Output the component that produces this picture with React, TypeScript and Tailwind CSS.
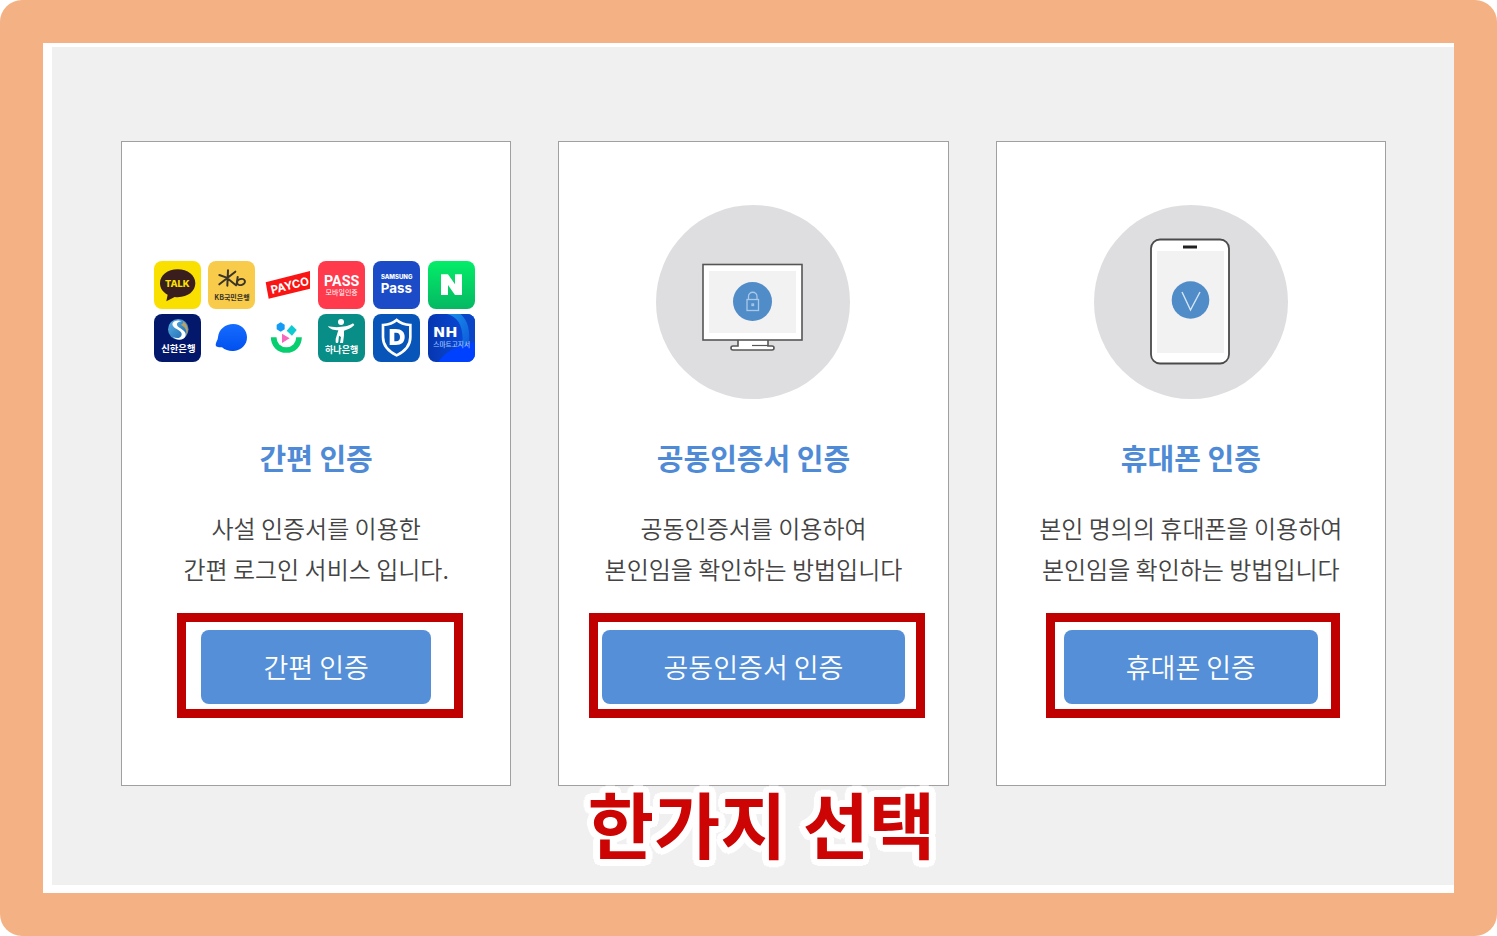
import type { ReactNode } from "react";

const KR = "'Noto Sans CJK KR', sans-serif";

function Tile({ label, children }: { label: string; children: ReactNode }) {
  return (
    <svg viewBox="0 0 141 144" className="h-12 w-[47px]" role="img" aria-label={label}>
      {children}
    </svg>
  );
}

function Providers() {
  return (
    <div className="grid w-[321px] grid-cols-[repeat(6,47px)] justify-between gap-y-[5px]">
      <Tile label="카카오톡">
        <rect width="141" height="144" rx="24" fill="#f9e000" />
        <path d="M71 25c-30 0-53 18-53 42 0 15 9 27 23 34l-4 20 25-13c35 4 62-15 62-41 0-24-23-42-53-42Z" fill="#3a1d1d" />
        <text x="70" y="77" textAnchor="middle" fontFamily="Inter, sans-serif" fontWeight="800" fontSize="28" fill="#f9e000">TALK</text>
      </Tile>
      <Tile label="KB국민은행">
        <rect width="141" height="144" rx="24" fill="#f8cb4b" />
        <g stroke="#3b3428" strokeWidth="6" fill="none" strokeLinecap="round">
          <path d="M60 28 58 74M82 32 34 70M34 42 56 50M58 52 84 73M89 48 86 70" />
          <ellipse cx="99" cy="63" rx="12" ry="9" transform="rotate(-18 99 63)" />
        </g>
        <text x="72" y="116" textAnchor="middle" fontFamily={KR} fontWeight="700" fontSize="21" fill="#3b3428">KB국민은행</text>
      </Tile>
      <Tile label="페이코">
        <path d="M8 64 141 30V83L17 113Z" fill="#fa1414" />
        <text x="27" y="99" transform="rotate(-14 27 99)" fontFamily="Inter, sans-serif" fontWeight="700" fontSize="34" fill="#fff">PAYCO</text>
      </Tile>
      <Tile label="PASS">
        <rect width="141" height="144" rx="24" fill="#ff3a4c" />
        <text x="71" y="75" textAnchor="middle" fontFamily="Roboto, sans-serif" fontWeight="700" fontSize="43" fill="#fff">PASS</text>
        <text x="71" y="103" textAnchor="middle" fontFamily={KR} fontSize="21" fill="#fff">모바일인증</text>
      </Tile>
      <Tile label="삼성패스">
        <rect width="141" height="144" rx="24" fill="#1c4bc8" />
        <text x="71" y="55" textAnchor="middle" fontFamily="Inter, sans-serif" fontWeight="800" fontSize="18" fill="#fff">SAMSUNG</text>
        <text x="70" y="97" textAnchor="middle" fontFamily="Inter, sans-serif" fontWeight="700" fontSize="40" fill="#fff">Pass</text>
      </Tile>
      <Tile label="네이버">
        <defs>
          <linearGradient id="naver" x2="0" y2="1">
            <stop stopColor="#03ed68" />
            <stop offset="1" stopColor="#05b863" />
          </linearGradient>
        </defs>
        <rect width="141" height="144" rx="24" fill="url(#naver)" />
        <path d="M39 40H60L81 70V40H102V102H81L60 72V102H39Z" fill="#fff" />
      </Tile>
      <Tile label="신한은행">
        <defs>
          <linearGradient id="shinhan" x2="1" y2="1">
            <stop stopColor="#5db4e6" />
            <stop offset="1" stopColor="#1763ad" />
          </linearGradient>
        </defs>
        <rect width="141" height="144" rx="24" fill="#04186b" />
        <circle cx="73" cy="46" r="31" fill="url(#shinhan)" />
        <path d="M84 22C66 14 50 25 57 36 63 46 85 49 83 62 81 73 67 75 56 68 68 82 91 79 95 65 99 48 71 43 69 33 67 26 77 22 84 22Z" fill="#fff" />
        <path d="M87 21C103 33 106 51 96 66 100 49 94 39 80 32 88 30 89 25 87 21Z" fill="#b9a268" />
        <text x="73" y="113" textAnchor="middle" fontFamily={KR} fontWeight="700" fontSize="28" fill="#fff">신한은행</text>
      </Tile>
      <Tile label="토스">
        <defs>
          <linearGradient id="toss" x2="0" y2="1">
            <stop stopColor="#166cff" />
            <stop offset="1" stopColor="#0050ee" />
          </linearGradient>
        </defs>
        <path d="M76 30C52 30 32 46 30 70 30 79 23 84 23 93 24 101 35 99 42 100 52 109 65 112 77 111 101 109 117 92 117 70 117 47 99 30 76 30Z" fill="url(#toss)" />
      </Tile>
      <Tile label="카카오뱅크">
        <path d="M41 32 53 25 65 32V46L53 53 41 46Z" fill="#159af5" />
        <path d="M86 33 101 48 87 65 71 50Z" fill="#0dcbd0" />
        <path d="M57 59 80 73 57 87Z" fill="#f568bd" />
        <path d="M32 70C32 92 48 108 70 108S108 92 108 70" fill="none" stroke="#07cf70" strokeWidth="17" />
      </Tile>
      <Tile label="하나은행">
        <rect width="141" height="144" rx="24" fill="#098e87" />
        <circle cx="69" cy="24" r="9" fill="#fff" />
        <path d="M30 36C47 42 86 41 105 28L109 33C99 43 88 47 78 50V64L75 87H66L69 69 63 65 61 84C60 88 53 88 53 84V75L59 55 61 49C49 49 35 46 30 36Z" fill="#fff" />
        <text x="71" y="116" textAnchor="middle" fontFamily={KR} fontWeight="700" fontSize="27" fill="#fff">하나은행</text>
      </Tile>
      <Tile label="드림인증">
        <rect width="141" height="144" rx="24" fill="#0755b8" />
        <path d="M71 18C61 27 45 32 30 33V70C30 96 48 113 71 124 94 113 112 96 112 70V33C97 32 81 27 71 18Z" fill="none" stroke="#fff" strokeWidth="8" />
        <path fillRule="evenodd" d="M50 45H68C86 45 95 54 95 69S86 93 68 93H50ZM64 56V82H69C77 82 81 78 81 69S77 56 69 56Z" fill="#fff" />
      </Tile>
      <Tile label="NH농협">
        <defs>
          <linearGradient id="nh" x2="1" y2="0">
            <stop stopColor="#0636b0" />
            <stop offset="1" stopColor="#0a4ee0" />
          </linearGradient>
          <linearGradient id="nhArc" x2="1" y2="1">
            <stop stopColor="#1a90ea" />
            <stop offset="1" stopColor="#0a50d8" />
          </linearGradient>
          <clipPath id="nhClip">
            <rect width="141" height="144" rx="24" />
          </clipPath>
        </defs>
        <g clipPath="url(#nhClip)">
          <rect width="141" height="144" fill="url(#nh)" />
          <path d="M57 0C87 8 104 32 104 75 104 90 98 104 90 112H141V0Z" fill="url(#nhArc)" />
          <path d="M98 0C120 20 128 50 122 100H141V0Z" fill="#0a45c8" />
          <path d="M30 144C52 112 90 92 141 84V144Z" fill="#0040ff" />
        </g>
        <text x="15" y="70" fontFamily="'DejaVu Sans', sans-serif" fontWeight="700" fontSize="44" fill="#fff">NH</text>
        <text x="16" y="98" fontFamily={KR} fontWeight="500" fontSize="20" fill="#9fc4ff">스마트고지서</text>
      </Tile>
    </div>
  );
}

function MonitorArt() {
  return (
    <svg viewBox="0 0 194 194" className="size-[194px]" aria-hidden="true">
      <circle cx="97" cy="97" r="97" fill="#dedee0" />
      <path d="M82 135V141H77Q75 141 75 143T77 145H116Q118 145 118 143T116 141H112V135" fill="#fff" stroke="#555" strokeWidth="1.6" />
      <path d="M96 140.500H112" stroke="#555" strokeWidth="1.2" />
      <rect x="47" y="59.500" width="99" height="75.500" fill="#fff" stroke="#555" strokeWidth="1.6" />
      <rect x="53" y="66" width="87" height="62" fill="#f2f2f2" />
      <circle cx="96.500" cy="96.500" r="19.500" fill="#508cc8" />
      <g fill="none" stroke="#a8c8e9" strokeWidth="1.300">
        <rect x="91" y="94.500" width="11.500" height="11" />
        <path d="M92.500 94V91.500a4 4 0 0 1 8.500 0V94" />
        <rect x="96" y="99" width="1.500" height="1.500" />
      </g>
    </svg>
  );
}

function PhoneArt() {
  return (
    <svg viewBox="0 0 194 194" className="size-[194px]" aria-hidden="true">
      <circle cx="97" cy="97" r="97" fill="#dedee0" />
      <rect x="57" y="34.500" width="78" height="124" rx="9" fill="#fff" stroke="#4a4a4a" strokeWidth="1.800" />
      <rect x="63" y="46" width="67" height="102" fill="#f2f2f2" />
      <path d="M89 42H103" stroke="#222" strokeWidth="3" />
      <circle cx="96.500" cy="95" r="18.800" fill="#508cc8" />
      <path d="M88 87 96.500 105 106 87" fill="none" stroke="#d6e6f6" strokeWidth="1.400" />
    </svg>
  );
}

interface MethodProps {
  title: string;
  lines: [string, string];
  art: ReactNode;
  markClass: string;
}

function Method({ title, lines, art, markClass }: MethodProps) {
  return (
    <section className="flex flex-col items-center border border-[#a0a0a0] bg-white pt-[63px] pb-[81px]">
      <div className="flex h-[194px] items-end justify-center">{art}</div>
      <h2 className="mt-[38px] text-[29px] leading-10 font-bold text-[#4f8ad6]">{title}</h2>
      <p className="mt-[30px] text-center text-2xl leading-[41px] font-[350] whitespace-nowrap text-[#444]">
        {lines[0]}
        <br />
        {lines[1]}
      </p>
      <div className="relative mt-[41px]">
        <button type="button" className="block h-[74px] rounded-lg bg-[#558fd8] px-[62px] text-[27px] font-[350] whitespace-nowrap text-white">
          {title}
        </button>
        <span className={`pointer-events-none absolute border-[9px] border-[#c00000] ${markClass}`} />
      </div>
    </section>
  );
}

export default function App() {
  return (
    <div className="min-h-screen bg-white font-['Noto_Sans_CJK_KR',sans-serif]">
      <div className="flex min-h-screen flex-col rounded-[22px] bg-[#f4b183] p-[43px]">
        <div className="flex grow flex-col bg-white pt-1 pb-2 pl-[9px]">
          <main className="grow bg-[#f0f0f0] pt-[94px] pr-[68px] pl-[69px]">
            <div className="grid grid-cols-3 gap-[47px]">
              <Method
                title="간편 인증"
                lines={["사설 인증서를 이용한", "간편 로그인 서비스 입니다."]}
                art={<div className="pr-1 pb-[37px]"><Providers /></div>}
                markClass="-top-[17px] -right-8 -bottom-[14px] -left-6"
              />
              <Method
                title="공동인증서 인증"
                lines={["공동인증서를 이용하여", "본인임을 확인하는 방법입니다"]}
                art={<MonitorArt />}
                markClass="-top-[17px] -right-5 -bottom-[14px] -left-[13px]"
              />
              <Method
                title="휴대폰 인증"
                lines={["본인 명의의 휴대폰을 이용하여", "본인임을 확인하는 방법입니다"]}
                art={<PhoneArt />}
                markClass="-top-[17px] -right-[22px] -bottom-[14px] -left-[18px]"
              />
            </div>
            <p className="relative -mt-[14px] pl-4 text-center text-[72px] leading-[100px] font-bold text-[#cc0404] [text-shadow:7px_0_#fff,6px_3px_#fff,5px_5px_#fff,3px_6px_#fff,0_7px_#fff,-3px_6px_#fff,-5px_5px_#fff,-6px_3px_#fff,-7px_0_#fff,-6px_-3px_#fff,-5px_-5px_#fff,-3px_-6px_#fff,0_-7px_#fff,3px_-6px_#fff,5px_-5px_#fff,6px_-3px_#fff]">
              한가지 선택
            </p>
          </main>
        </div>
      </div>
    </div>
  );
}
